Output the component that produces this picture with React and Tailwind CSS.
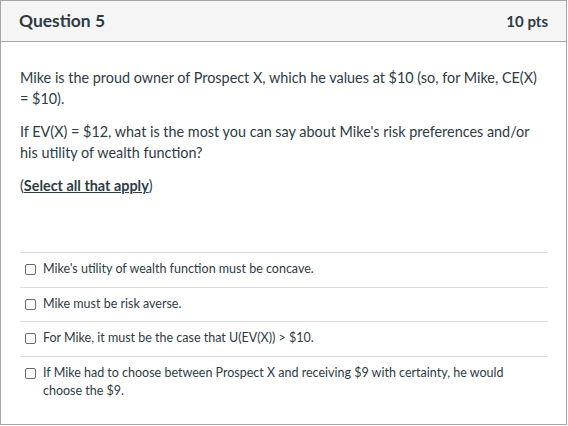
import React from "react";

const respuestas = [
  "Mike's utility of wealth function must be concave.",
  "Mike must be risk averse.",
  "For Mike, it must be the case that U(EV(X)) > $10.",
  "If Mike had to choose between Prospect X and receiving $9 with certainty, he would choose the $9.",
];

export default function App() {
  return (
    <div className="w-[567px] h-[425px] border border-[#a6a6a6] bg-white font-['Lato',sans-serif] text-[#2d3b45] overflow-hidden">
      <div className="h-[41px] bg-[#f5f5f5] border-b border-[#a6a6a6] flex items-center justify-between pl-[18px] pr-[18px]">
        <h2 className="text-[17.4px] font-bold">Question 5</h2>
        <span className="text-[15px] font-bold">10 pts</span>
      </div>

      <div className="pl-[19px] pr-[18px] pt-[25px]">
        <div className="text-[14.4px] leading-[21px]">
          <p>
            Mike is the proud owner of Prospect X, which he values at $10 (so, for Mike, CE(X) = $10).
          </p>
          <p className="mt-[12px]">
            If EV(X) = $12, what is the most you can say about Mike's risk preferences and/or his utility of wealth function?
          </p>
          <p className="mt-[12px]">
            (<strong className="underline">Select all that apply</strong>)
          </p>
        </div>

        <ul className="mt-[56px]">
          {respuestas.map((texto) => (
            <li
              key={texto}
              className="border-t border-[#dcdcdc] flex items-start pt-[7px] pb-[8.5px] pl-[5px]"
            >
              <span className="mt-[4px] w-[11px] h-[11px] shrink-0 border border-[#6b6b6b] rounded-[2px] bg-white" />
              <span className="ml-[7px] text-[12.5px] leading-[18px] pr-[30px]">{texto}</span>
            </li>
          ))}
        </ul>
      </div>
    </div>
  );
}
